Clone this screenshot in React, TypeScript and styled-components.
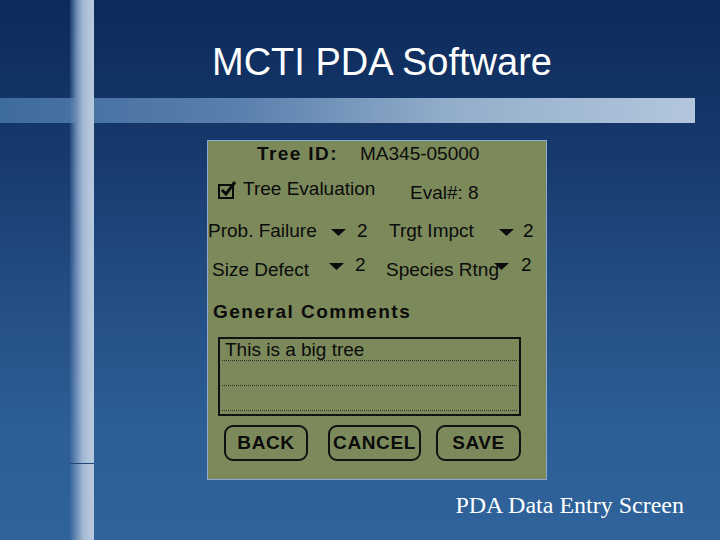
import React from 'react'
import styled, {createGlobalStyle} from 'styled-components'

const GlobalStyle = createGlobalStyle`
  body {
    margin: 0;
    background: #0c2c5b;
  }
`

const Root = styled.div`
  display: flex;
  flex-direction: column;
  width: 720px;
  height: 540px;
  overflow: hidden;
  background:
    linear-gradient(to bottom, transparent 463px, #234777 463px, #234777 464px, transparent 464px) 70px 0 / 24px 100% no-repeat,
    linear-gradient(90deg, rgba(80, 115, 165, 0.25) 0%, #6d8db7 28%, #9fb5d1 52%, #b3c5db 78%, #b8c9dd 100%) 70px 0 / 24px 100% no-repeat,
    linear-gradient(90deg, #3e6b9d 0%, #5a80ad 35%, #93aecb 65%, #b3c6dc 100%) 0 98px / 695px 25px no-repeat,
    linear-gradient(180deg, #0b2b5a 0%, #15376a 25%, #234e84 55%, #2d5e96 80%, #30639b 100%);
`

const Title = styled.h1`
  margin: 40px 0 0;
  padding-left: 44px;
  text-align: center;
  font: 400 38px/44px "Liberation Sans", Arial, sans-serif;
  color: #fff;
`

const Screen = styled.div`
  display: flex;
  flex-direction: column;
  box-sizing: border-box;
  width: 340px;
  height: 340px;
  margin: 56px 0 0 207px;
  padding-top: 3px;
  border: 1px solid #8eaad3;
  background: #7c8a5b;
  color: #0b0b0b;
  font: 400 19px/20px "Liberation Sans", Arial, sans-serif;
`

const Row = styled.div<{$top: number; $left: number}>`
  display: flex;
  align-items: flex-start;
  margin-top: ${({$top}) => $top}px;
  padding-left: ${({$left}) => $left}px;
  height: 20px;
`

const BoldLabel = styled.span<{$w?: number}>`
  font-weight: 700;
  letter-spacing: 1.4px;
  ${({$w}) => ($w ? `width: ${$w}px;` : '')}
`

const Text = styled.span<{$w?: number; $down?: number}>`
  white-space: nowrap;
  ${({$w}) => ($w ? `width: ${$w}px;` : '')}
  margin-top: ${({$down}) => $down || 0}px;
`

const CheckIcon = styled.svg`
  width: 20px;
  height: 18px;
  margin: 2px 5px 0 0;
`

const Field = styled.div<{$w?: number}>`
  display: flex;
  align-items: flex-start;
  ${({$w}) => ($w ? `width: ${$w}px;` : '')}
`

const Trigger = styled.div<{$lift?: number}>`
  display: flex;
  align-items: center;
  height: 20px;
  margin-top: ${({$lift}) => -($lift || 0)}px;
`

const Arrow = styled.svg`
  width: 15px;
  height: 7px;
  margin-top: 2px;
`

const Value = styled.span<{$gap: number}>`
  margin-left: ${({$gap}) => $gap}px;
`

const Heading = styled.div`
  margin: 22px 0 0 5px;
  font-weight: 700;
  letter-spacing: 1.5px;
`

const CommentBox = styled.div`
  display: flex;
  flex-direction: column;
  box-sizing: border-box;
  width: 303px;
  height: 79px;
  margin: 15px 0 0 10px;
  border: 2px solid #111;
`

const CommentLine = styled.div<{$h: number}>`
  box-sizing: border-box;
  height: ${({$h}) => $h}px;
  margin: 0 2px;
  padding-left: 3px;
  border-bottom: 1px dotted #2b3022;
  line-height: 22px;
`

const ButtonRow = styled.div`
  display: flex;
  margin: 9px 0 0 16px;
`

const PalmButton = styled.div<{$w: number; $gap: number}>`
  display: flex;
  align-items: center;
  justify-content: center;
  box-sizing: border-box;
  width: ${({$w}) => $w}px;
  height: 36px;
  margin-left: ${({$gap}) => $gap}px;
  border: 2px solid #111;
  border-radius: 9px;
  font-weight: 700;
  letter-spacing: 0.6px;
`

const Caption = styled.div`
  margin-top: 11px;
  padding-right: 36px;
  text-align: right;
  font: 400 24px/28px "Liberation Serif", "Times New Roman", serif;
  color: #fff;
`

const DownArrow = () => (
  <Arrow viewBox="0 0 15 7">
    <polygon points="0,0 15,0 7.5,7" fill="#0b0b0b" />
  </Arrow>
)

type SelectProps = {
  label: string
  labelWidth: number
  value: string
  gap: number
  width?: number
  lift?: number
}

const Select = ({label, labelWidth, value, gap, width, lift}: SelectProps) => (
  <Field $w={width}>
    <Text $w={labelWidth}>{label}</Text>
    <Trigger $lift={lift}>
      <DownArrow />
      <Value $gap={gap}>{value}</Value>
    </Trigger>
  </Field>
)

export default function App() {
  return (
    <Root>
      <GlobalStyle />
      <Title>MCTI PDA Software</Title>

      <Screen>
        <Row $top={0} $left={49}>
          <BoldLabel $w={103}>Tree ID:</BoldLabel>
          <Text>MA345-05000</Text>
        </Row>

        <Row $top={15} $left={10}>
          <CheckIcon viewBox="0 0 20 18">
            <rect x="1" y="4" width="14" height="13" fill="none" stroke="#0b0b0b" strokeWidth="2" />
            <path d="M4 9 L8 13 L17 1" fill="none" stroke="#0b0b0b" strokeWidth="3" />
          </CheckIcon>
          <Text $w={167}>Tree Evaluation</Text>
          <Text $down={4}>Eval#: 8</Text>
        </Row>

        <Row $top={22} $left={0}>
          <Select label="Prob. Failure" labelWidth={123} value="2" gap={11} width={181} />
          <Select label="Trgt Impct" labelWidth={110} value="2" gap={9} />
        </Row>

        <Row $top={19} $left={4}>
          <Select label="Size Defect" labelWidth={117} value="2" gap={11} width={174} lift={5} />
          <Select label="Species Rtng" labelWidth={108} value="2" gap={12} lift={5} />
        </Row>

        <Heading>General Comments</Heading>

        <CommentBox>
          <CommentLine $h={22}>This is a big tree</CommentLine>
          <CommentLine $h={25} />
          <CommentLine $h={25} />
        </CommentBox>

        <ButtonRow>
          <PalmButton $w={84} $gap={0}>BACK</PalmButton>
          <PalmButton $w={93} $gap={20}>CANCEL</PalmButton>
          <PalmButton $w={85} $gap={15}>SAVE</PalmButton>
        </ButtonRow>
      </Screen>

      <Caption>PDA Data Entry Screen</Caption>
    </Root>
  )
}
